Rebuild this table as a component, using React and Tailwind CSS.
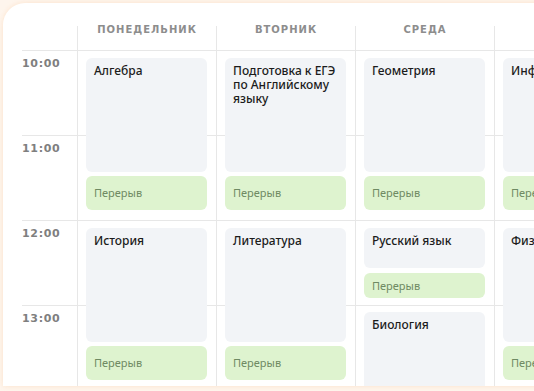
import React from "react";

const HOURS = ["10:00", "11:00", "12:00", "13:00"];

// top / height in px from the start of the day grid
const DAYS = [
  {
    name: "ПОНЕДЕЛЬНИК",
    events: [
      { title: "Алгебра", top: 7, h: 114 },
      { title: "Перерыв", top: 125, h: 34, pause: true },
      { title: "История", top: 177, h: 114 },
      { title: "Перерыв", top: 295, h: 34, pause: true },
    ],
  },
  {
    name: "ВТОРНИК",
    events: [
      { title: "Подготовка к ЕГЭ по Английскому языку", top: 7, h: 114 },
      { title: "Перерыв", top: 125, h: 34, pause: true },
      { title: "Литература", top: 177, h: 114 },
      { title: "Перерыв", top: 295, h: 34, pause: true },
    ],
  },
  {
    name: "СРЕДА",
    events: [
      { title: "Геометрия", top: 7, h: 114 },
      { title: "Перерыв", top: 125, h: 34, pause: true },
      { title: "Русский язык", top: 177, h: 40 },
      { title: "Перерыв", top: 222, h: 25, pause: true },
      { title: "Биология", top: 261, h: 120 },
    ],
  },
  {
    name: "ЧЕТВЕРГ",
    events: [
      { title: "Информатика", top: 7, h: 114 },
      { title: "Перерыв", top: 125, h: 34, pause: true },
      { title: "Физика", top: 177, h: 114 },
      { title: "Перерыв", top: 295, h: 34, pause: true },
    ],
  },
];

const headFont = { fontFamily: '"DejaVu Sans", sans-serif' };
const bodyFont = { fontFamily: '"Noto Sans", "Open Sans", sans-serif' };

function Lesson({ ev }) {
  if (ev.pause) {
    return (
      <div
        className="absolute left-[8px] w-[121px] rounded-[6px] bg-[#def3cf] px-[8px] flex items-center text-[11px] leading-[14px] text-[#6f8a63]"
        style={{ top: ev.top, height: ev.h, ...bodyFont }}
      >
        {ev.title}
      </div>
    );
  }
  return (
    <div
      className="absolute left-[8px] w-[121px] rounded-[6px] bg-[#f2f4f7] px-[8px] pt-[6px] text-[12px] leading-[14px] font-medium text-[#1c1c1c]"
      style={{ top: ev.top, height: ev.h, ...bodyFont }}
    >
      {ev.title}
    </div>
  );
}

function DayColumn({ day }) {
  return (
    <div className="w-[139px] shrink-0 border-l border-[#e7e7e7] flex flex-col">
      <div
        className="h-[25px] shrink-0 border-b border-[#e7e7e7] text-center text-[10px] leading-[8px] font-bold tracking-[0.1em] text-[#8d8d8d]"
        style={headFont}
      >
        {day.name}
      </div>
      <div className="relative shrink-0">
        {HOURS.map((h) => (
          <div key={h} className="h-[85px] shrink-0 border-b border-[#e7e7e7]" />
        ))}
        {day.events.map((ev, i) => (
          <Lesson key={i} ev={ev} />
        ))}
      </div>
    </div>
  );
}

export default function App() {
  return (
    <div className="w-[534px] h-[391px] overflow-hidden bg-[#fef5ed] pl-[3px] pt-[3px]">
      <div className="w-[640px] h-[383px] overflow-hidden bg-white rounded-tl-[22px] shadow-[0_0_5px_rgba(251,214,180,0.6)] pt-[23px] pl-[19px] flex items-start">
        <div className="w-[55px] shrink-0 flex flex-col">
          <div className="h-[25px] shrink-0 border-b border-[#e7e7e7]" />
          {HOURS.map((h) => (
            <div
              key={h}
              className="h-[85px] shrink-0 border-b border-[#e7e7e7] pt-[7px] text-[11px] leading-[12px] font-bold tracking-[0.06em] text-[#7f7f7f]"
              style={headFont}
            >
              {h}
            </div>
          ))}
        </div>
        {DAYS.map((d) => (
          <DayColumn key={d.name} day={d} />
        ))}
      </div>
    </div>
  );
}
